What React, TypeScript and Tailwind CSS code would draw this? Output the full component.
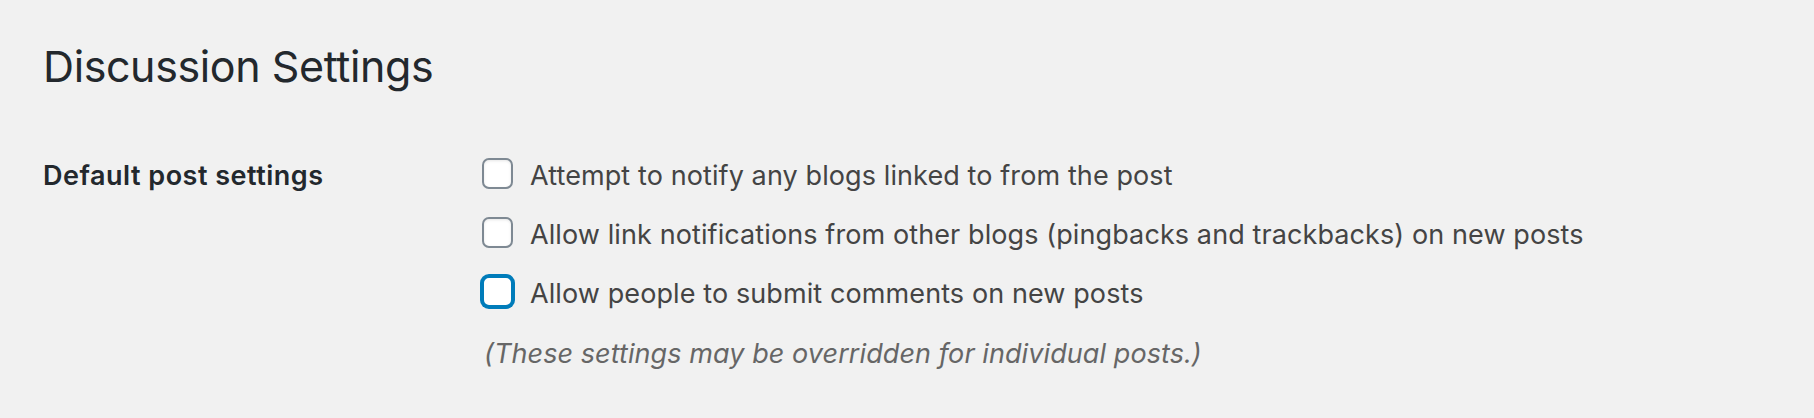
import React from "react";

function Box({ focused }: { focused?: boolean }) {
  return (
    <span
      className={
        "inline-block w-[31px] h-[31px] shrink-0 rounded-[7px] bg-white border-2 " +
        (focused
          ? "border-[#007cba] shadow-[0_0_0_2px_#007cba]"
          : "border-[#7e8993] shadow-[inset_0_1px_3px_rgba(0,0,0,0.1)]")
      }
    />
  );
}

function Row({ text, focused }: { text: string; focused?: boolean }) {
  return (
    <div className="h-[59px] flex items-center">
      <Box focused={focused} />
      <span className="ml-[17px] pt-[5px] text-[27px] leading-[36px] text-[#444] tracking-[0.1px]">
        {text}
      </span>
    </div>
  );
}

export default function App() {
  return (
    <div
      className="w-[1814px] h-[418px] bg-[#f1f1f1] pl-[43px] overflow-hidden"
      style={{ fontFamily: "Inter, 'Noto Sans', sans-serif" }}
    >
      <h1 className="pt-[38px] text-[43px] leading-[57px] font-normal text-[#23282d] tracking-[-0.4px]">
        Discussion Settings
      </h1>
      <div className="flex mt-[49px]">
        <div className="w-[439px] shrink-0 h-[59px] flex items-center">
          <span className="pt-[5px] text-[27px] leading-[36px] font-semibold text-[#23282d] tracking-[0.5px]">
            Default post settings
          </span>
        </div>
        <div className="flex flex-col">
          <Row text="Attempt to notify any blogs linked to from the post" />
          <Row text="Allow link notifications from other blogs (pingbacks and trackbacks) on new posts" />
          <Row text="Allow people to submit comments on new posts" focused />
          <p className="mt-[15px] ml-[2px] text-[27px] leading-[36px] italic text-[#666] tracking-[0.08px]">
            (These settings may be overridden for individual posts.)
          </p>
        </div>
      </div>
    </div>
  );
}
